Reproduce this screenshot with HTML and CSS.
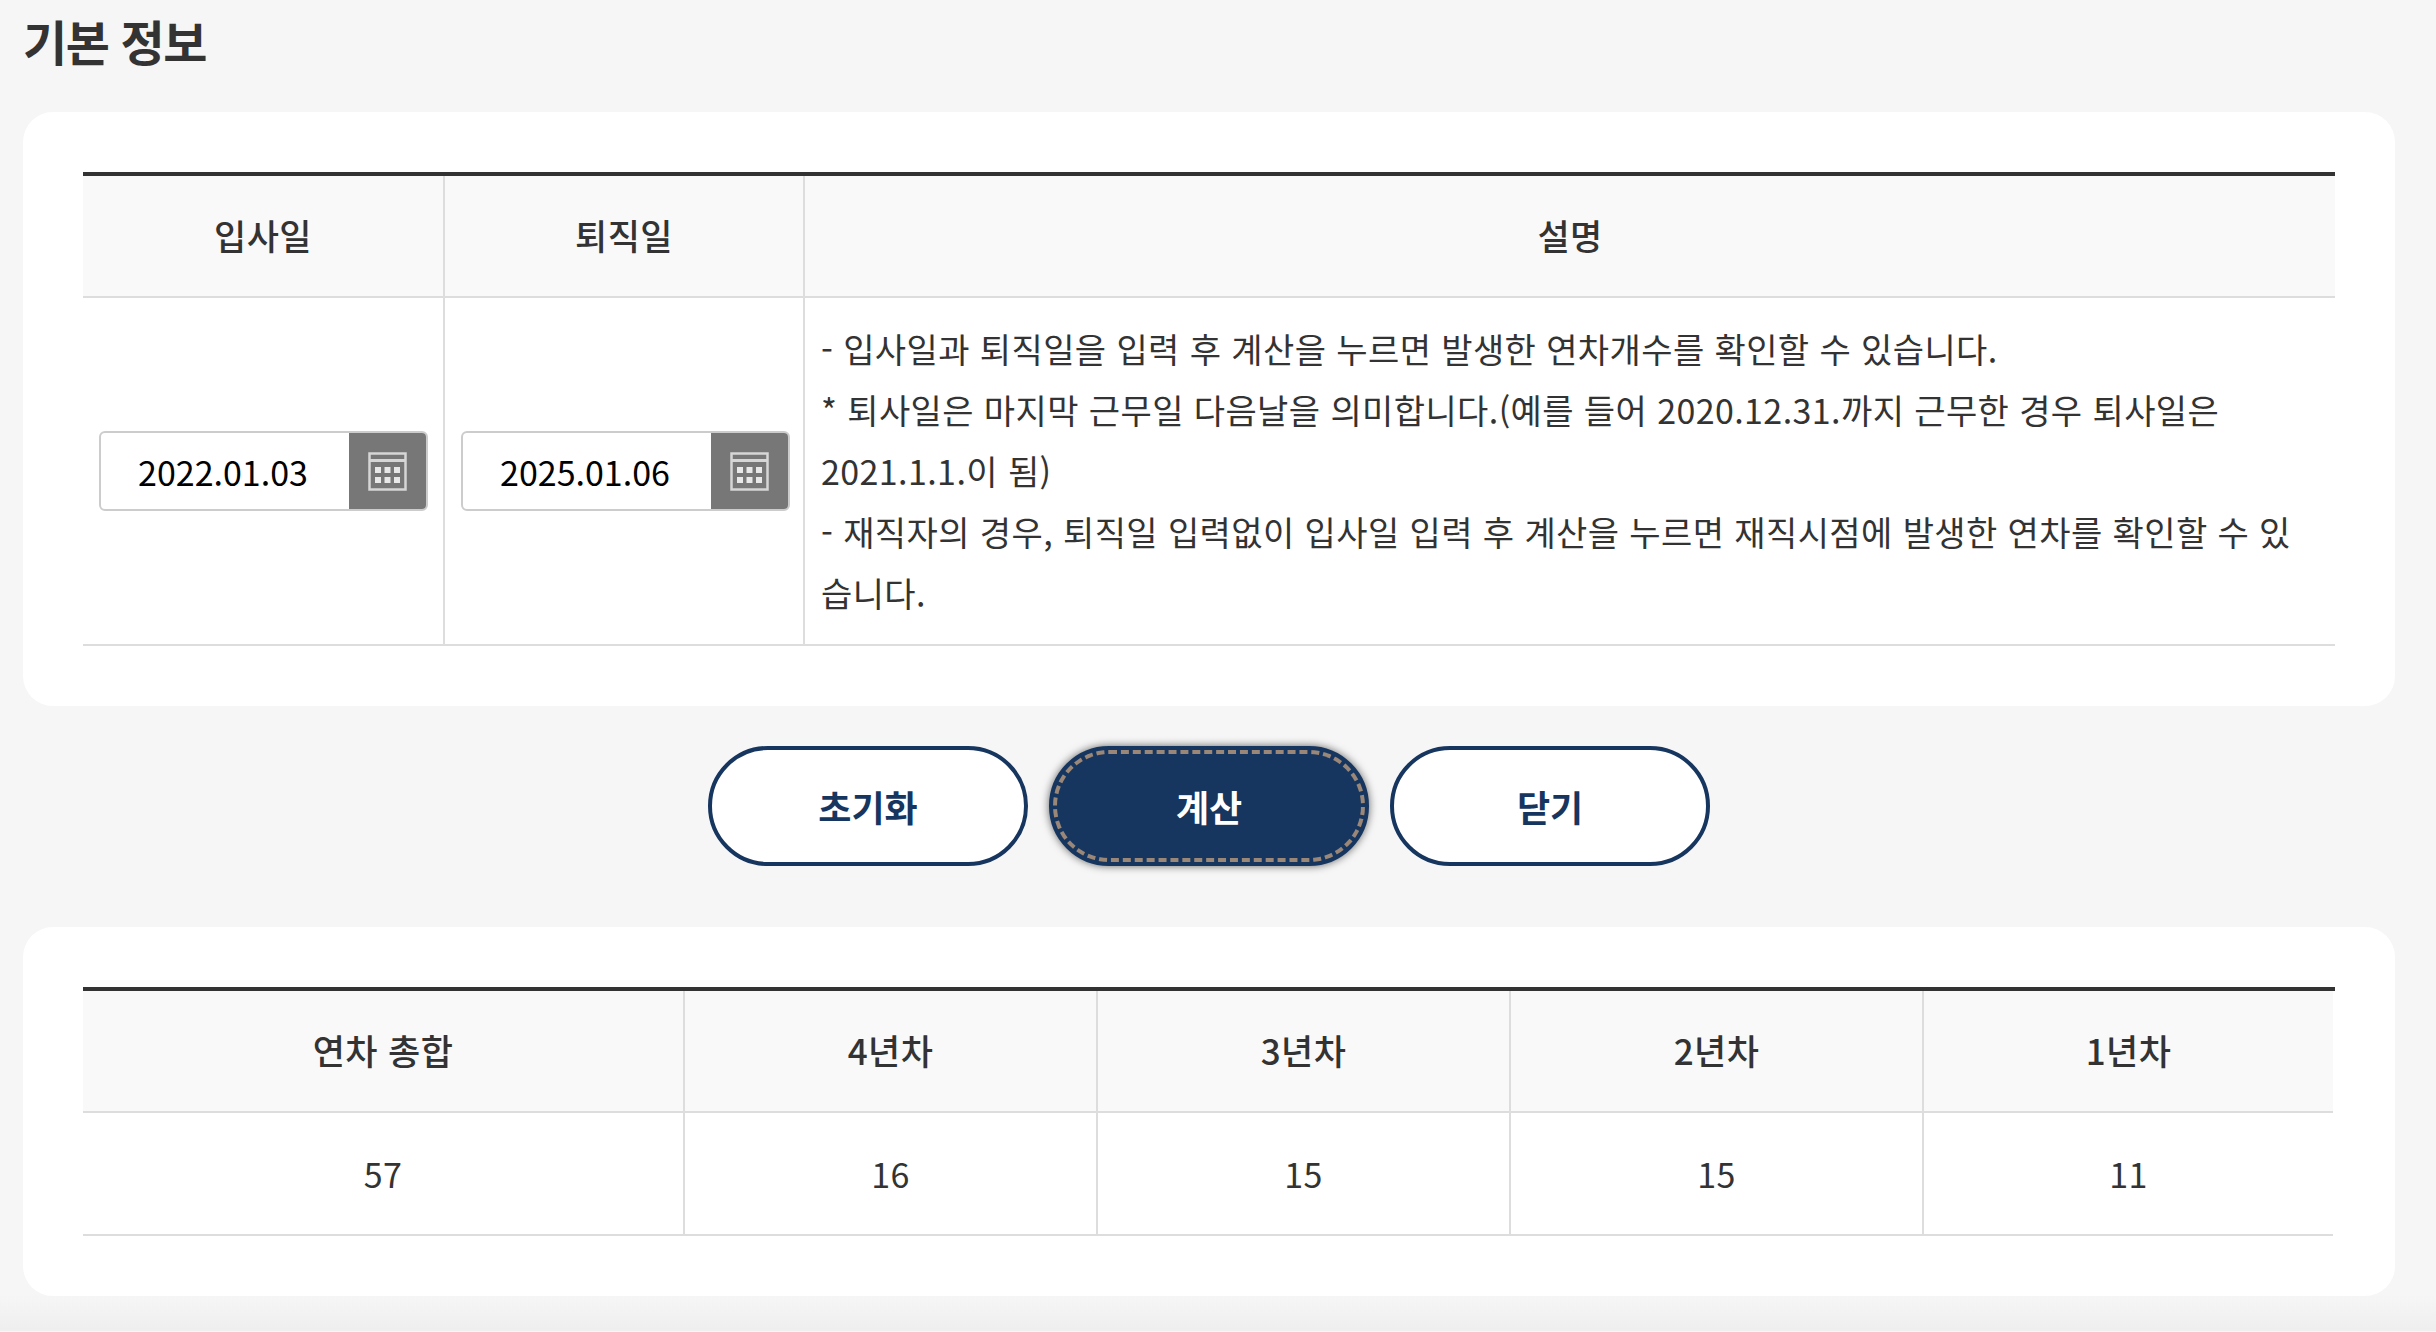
FILE: index.html
```html
<!DOCTYPE html>
<html lang="ko">
<head>
  <meta charset="UTF-8" />
  <meta name="viewport" content="width=device-width, initial-scale=1.0" />
  <title>연차 계산기</title>
  <link rel="stylesheet" href="styles.css">
</head>
<body>
  <h2 class="title">기본 정보</h2>

  <div class="panel">
    <div class="table-wrap">
      <table class="info-table">
        <colgroup>
          <col class="col-in">
          <col class="col-out">
          <col>
        </colgroup>
        <thead>
          <tr>
            <th>입사일</th>
            <th>퇴직일</th>
            <th>설명</th>
          </tr>
        </thead>
        <tbody>
          <tr>
            <td>
              <div class="date-box">
                <span class="date-value">2022.01.03</span>
                <span class="date-btn">
                  <svg width="39" height="39" viewBox="0 0 39 39" fill="none">
                    <rect x="1.5" y="1.5" width="36" height="36" stroke="#d6d6d6" stroke-width="2.5"/>
                    <path d="M2 8.5H37" stroke="#d6d6d6" stroke-width="3"/>
                    <path d="M7 15h6v6H7zM16.500 15h6v6h-6zM26 15h6v6h-6zM7 25h6v6H7zM16.500 25h6v6h-6zM26 25h6v6h-6z" fill="#e8e8e8"/>
                  </svg>
                </span>
              </div>
            </td>
            <td>
              <div class="date-box">
                <span class="date-value">2025.01.06</span>
                <span class="date-btn">
                  <svg width="39" height="39" viewBox="0 0 39 39" fill="none">
                    <rect x="1.5" y="1.5" width="36" height="36" stroke="#d6d6d6" stroke-width="2.5"/>
                    <path d="M2 8.5H37" stroke="#d6d6d6" stroke-width="3"/>
                    <path d="M7 15h6v6H7zM16.500 15h6v6h-6zM26 15h6v6h-6zM7 25h6v6H7zM16.500 25h6v6h-6zM26 25h6v6h-6z" fill="#e8e8e8"/>
                  </svg>
                </span>
              </div>
            </td>
            <td class="desc">
              - 입사일과 퇴직일을 입력 후 계산을 누르면 발생한 연차개수를 확인할 수 있습니다.<br>
              * 퇴사일은 마지막 근무일 다음날을 의미합니다.(예를 들어 2020.12.31.까지 근무한 경우 퇴사일은 2021.1.1.이 됨)<br>
              - 재직자의 경우, 퇴직일 입력없이 입사일 입력 후 계산을 누르면 재직시점에 발생한 연차를 확인할 수 있습니다.
            </td>
          </tr>
        </tbody>
      </table>
    </div>
  </div>

  <div class="buttons">
    <button class="btn">초기화</button>
    <button class="btn btn-on">계산</button>
    <button class="btn">닫기</button>
  </div>

  <div class="panel">
    <div class="table-wrap">
      <table class="info-table result-table">
        <colgroup>
          <col class="col-total">
          <col class="col-year">
          <col class="col-year">
          <col class="col-year">
          <col>
        </colgroup>
        <thead>
          <tr>
            <th>연차 총합</th>
            <th>4년차</th>
            <th>3년차</th>
            <th>2년차</th>
            <th>1년차</th>
          </tr>
        </thead>
        <tbody>
          <tr>
            <td>57</td>
            <td>16</td>
            <td>15</td>
            <td>15</td>
            <td>11</td>
          </tr>
        </tbody>
      </table>
    </div>
  </div>
</body>
</html>
```

FILE: styles.css
```css
* {
  box-sizing: border-box;
}
body {
  margin: 0;
  padding: 0 41px 35px 23px;
  background: linear-gradient(#f6f6f6 1295px, #eeeeee 1332px);
  font-family: "Noto Sans CJK KR", "Noto Sans", sans-serif;
  font-size: 34px;
  line-height: 1.8;
  letter-spacing: 0.4px;
  color: #333;
}
.title {
  margin: 0;
  height: 112px;
  padding-top: 4px;
  font-size: 48px;
  line-height: 72px;
  font-weight: 700;
  letter-spacing: -1.4px;
}
.panel {
  background: #fff;
  border-radius: 30px;
  padding: 60px;
}
.table-wrap {
  border-top: 4px solid #333;
}
.info-table {
  width: 100%;
  table-layout: fixed;
  border-collapse: collapse;
}
.result-table {
  width: 2250px;
}
.info-table th {
  height: 121px;
  padding: 0 0 3px;
  background: #f9f9f9;
  font-size: 35px;
  font-weight: 500;
  text-align: center;
  border-bottom: 2px solid #ddd;
  border-right: 2px solid #ddd;
}
.info-table td {
  height: 123px;
  padding: 0 16px;
  text-align: center;
  border-bottom: 2px solid #ddd;
  border-right: 2px solid #ddd;
}
.info-table th:last-child,
.info-table td:last-child {
  border-right: 0;
}
.col-in {
  width: 361px;
}
.col-out {
  width: 360px;
}
.col-total {
  width: 601px;
}
.col-year {
  width: 413px;
}
.info-table td.desc {
  height: 348px;
  padding-right: 22px;
  padding-bottom: 1px;
  text-align: left;
}
.date-box {
  display: flex;
  width: 329px;
  height: 80px;
  background: #fff;
  border: 2px solid #ccc;
  border-radius: 6px;
  overflow: hidden;
  line-height: 78px;
}
.date-value {
  flex: 1;
  padding-right: 4px;
  color: #000;
  text-align: center;
  letter-spacing: 0;
}
.date-btn {
  display: flex;
  align-items: center;
  justify-content: center;
  width: 77px;
  background: #777;
}
.buttons {
  display: flex;
  justify-content: center;
  gap: 21px;
  padding: 40px 0 61px;
}
.btn {
  width: 320px;
  height: 120px;
  background: #fff;
  border: 4px solid #16365f;
  border-radius: 60px;
  color: #16365f;
  font-family: inherit;
  font-size: 36px;
  font-weight: 700;
  letter-spacing: 0;
  cursor: pointer;
}
.btn-on {
  background: #16365f;
  color: #fff;
  outline: 4px dashed #9a8778;
  outline-offset: -8px;
  box-shadow: 0 0 8px rgba(0, 0, 0, 0.6);
}
```
